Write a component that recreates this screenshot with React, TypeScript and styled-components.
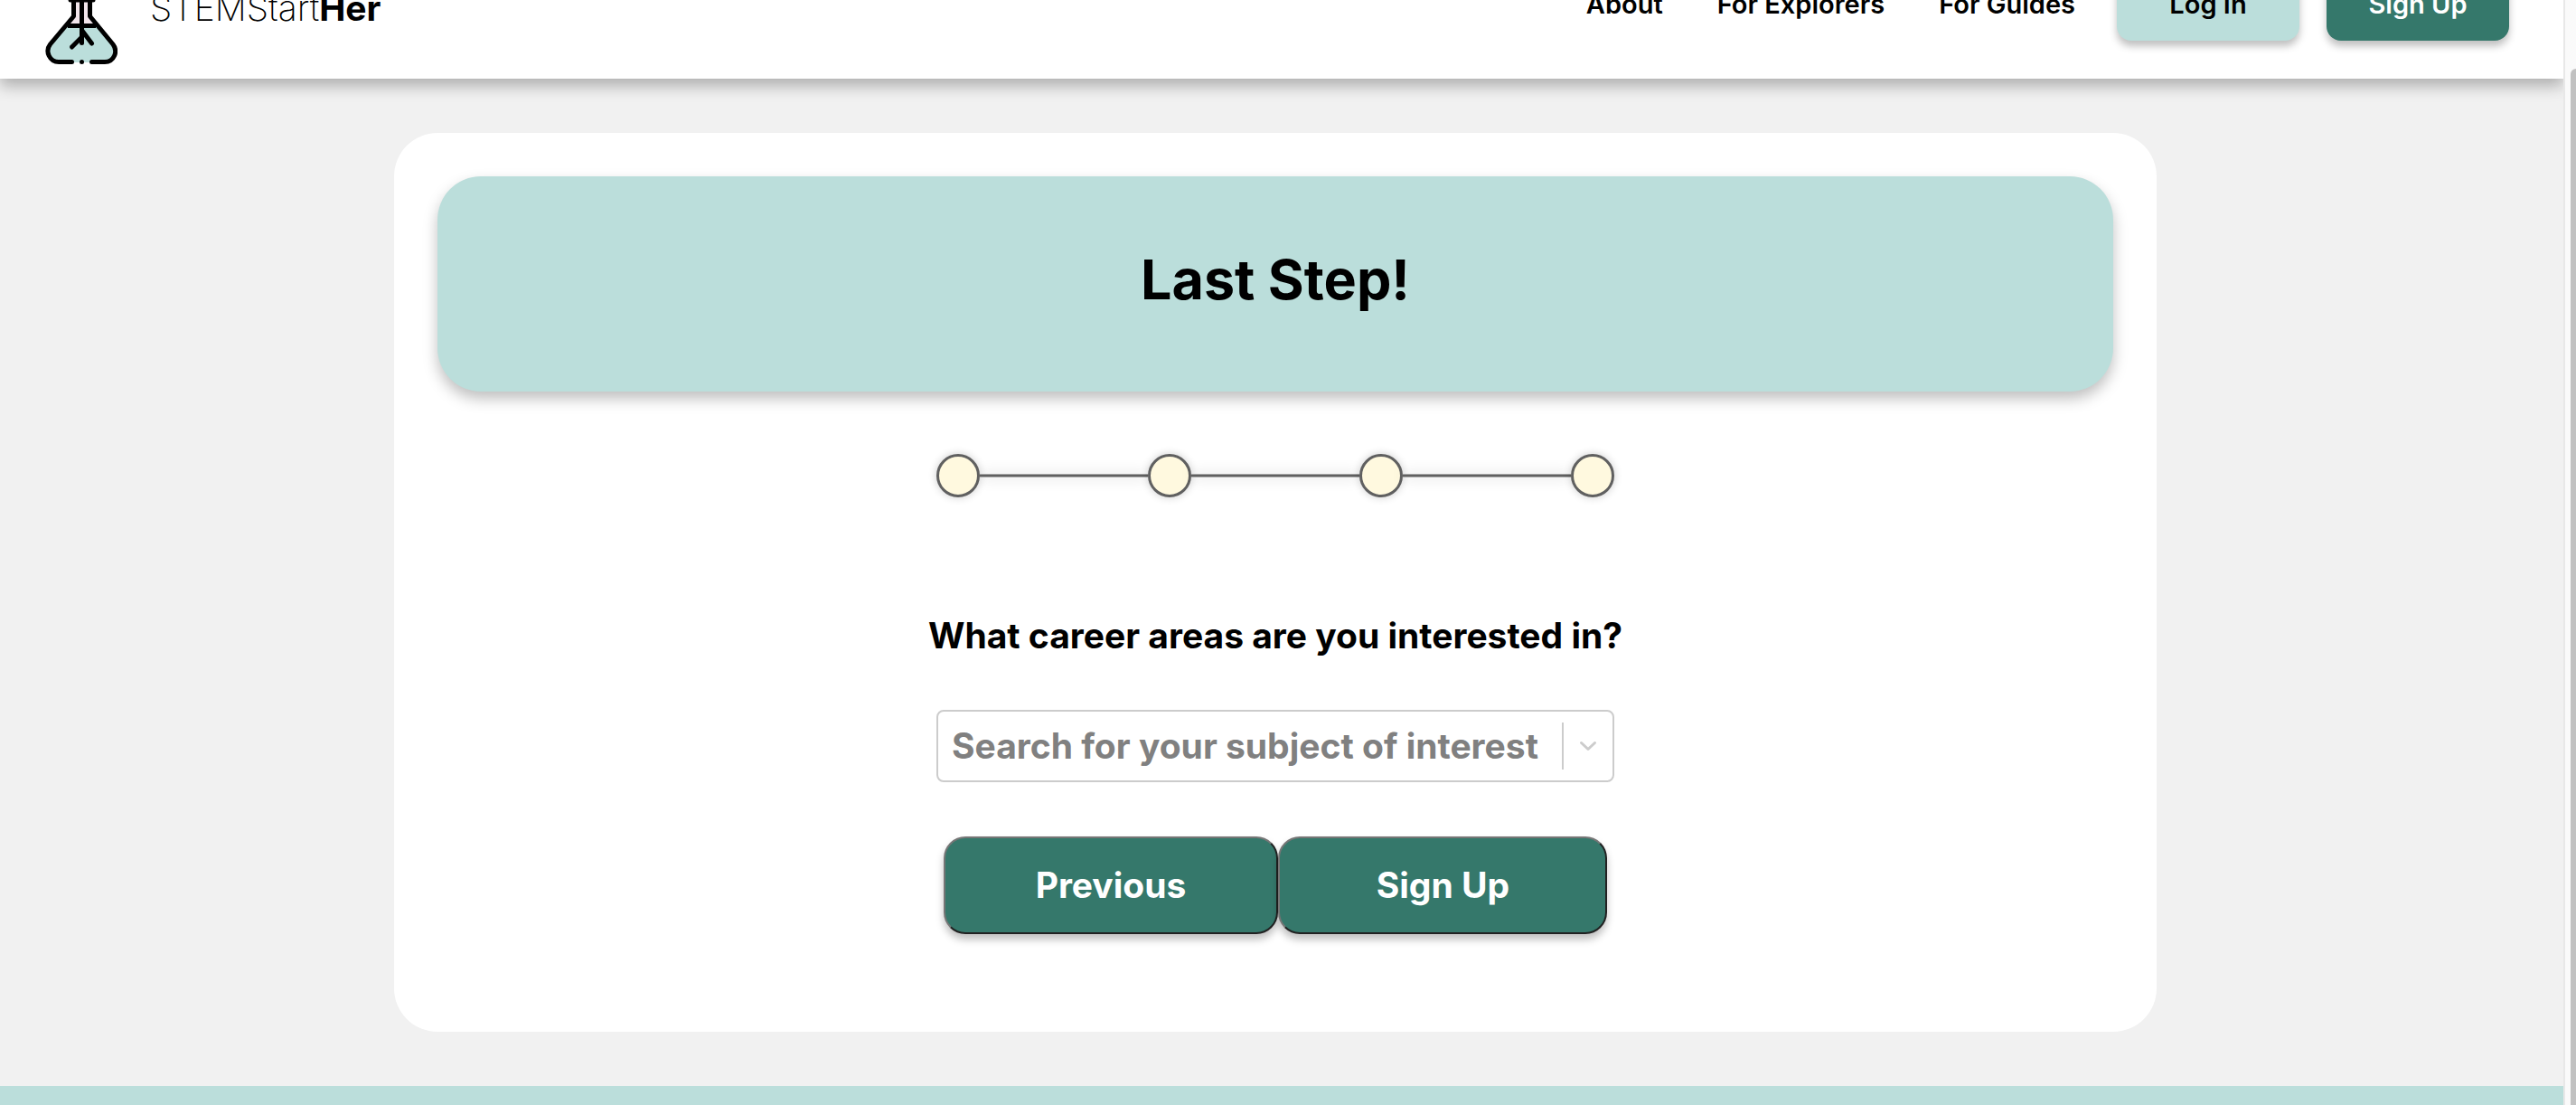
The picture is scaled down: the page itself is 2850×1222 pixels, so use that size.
import React from "react";
import styled, { createGlobalStyle } from "styled-components";

const color = {
  mint: "#bbdedb",
  green: "#35786b",
  page: "#f1f1f1",
  line: "#606060",
  cream: "#fff9df",
  field: "#cccccc",
};

const GlobalStyle = createGlobalStyle`
  *, *::before, *::after { box-sizing: border-box; }
  body {
    margin: 0;
    background: ${color.page};
    color: #000;
    font-family: Inter, "Open Sans", sans-serif;
  }
`;

const Frame = styled.div`
  display: flex;
  min-height: 100vh;
  overflow: hidden;
`;

const Page = styled.div`
  flex: 1;
  min-width: 0;
  display: flex;
  flex-direction: column;
  overflow: hidden;
`;

const ScrollTrack = styled.div`
  width: 14px;
  display: flex;
  padding: 76px 0 0 6px;
  border-left: 2px solid #e8e8e8;
  background: #fafafa;
`;

const ScrollThumb = styled.div`
  flex: 1;
  border-radius: 8px 0 0 0;
  background: #c1c1c1;
`;

/* The page is scrolled a little, so the bar starts above the window. */
const Header = styled.header`
  display: flex;
  align-items: center;
  justify-content: space-between;
  height: 164px;
  margin-top: -77px;
  padding: 0 60px 0 50px;
  background: #fff;
  box-shadow: 0 8px 16px rgba(0, 0, 0, 0.28);
`;

const Brand = styled.a`
  display: flex;
  align-items: center;
  gap: 36px;
  color: #000;
  text-decoration: none;
`;

const Wordmark = styled.span`
  padding-top: 8px;
  font-size: 39px;
  font-weight: 200;
  line-height: 56px;

  strong { font-weight: 700; }
`;

const Nav = styled.nav`
  display: flex;
  align-items: center;
  gap: 60px;
`;

const NavLink = styled.a`
  color: #000;
  text-decoration: none;
  font-size: 29px;
  font-weight: 600;
  line-height: 40px;
`;

const NavButtons = styled.div`
  display: flex;
  gap: 30px;
  margin-left: -14px;
`;

const NavButton = styled.button<{ $primary?: boolean }>`
  width: 202px;
  height: 80px;
  border: 0;
  border-radius: 16px;
  background: ${(p) => (p.$primary ? color.green : color.mint)};
  color: ${(p) => (p.$primary ? "#fff" : "#000")};
  box-shadow: 0 6px 8px rgba(0, 0, 0, 0.25);
  font: 600 29px/40px Inter, sans-serif;
`;

const Main = styled.main`
  display: flex;
  justify-content: center;
  padding: 60px 74px 60px 60px;
`;

const Card = styled.section`
  flex: 1;
  max-width: 1950px;
  display: flex;
  flex-direction: column;
  align-items: center;
  padding: 48px 48px 108px;
  border-radius: 48px;
  background: #fff;
`;

const Banner = styled.div`
  align-self: stretch;
  padding: 76px 48px 86px;
  border-radius: 48px;
  background: ${color.mint};
  box-shadow: 0 8px 16px rgba(0, 0, 0, 0.25);
  text-align: center;
`;

const Title = styled.h1`
  margin: 0;
  font-size: 61px;
  font-weight: 700;
  line-height: 76px;
`;

const Steps = styled.ol`
  display: flex;
  align-items: center;
  width: 750px;
  max-width: 100%;
  margin: 69px 0 0;
  padding: 0;
  list-style: none;
`;

const Step = styled.li`
  display: flex;
  align-items: center;

  &:not(:first-child) { flex: 1; }

  &:not(:first-child)::before {
    content: "";
    flex: 1;
    height: 4px;
    border: solid #a6a6a6;
    border-width: 1px 0;
    background: ${color.line};
    box-shadow: 0 0 16px rgba(0, 0, 0, 0.2);
  }
`;

const Dot = styled.span`
  width: 48px;
  height: 48px;
  border: 3px solid ${color.line};
  border-radius: 50%;
  background: ${color.cream};
  box-shadow: 0 0 10px rgba(0, 0, 0, 0.2);
`;

const Form = styled.form`
  display: flex;
  flex-direction: column;
  align-items: center;
  max-width: 100%;
  margin-top: 125px;
`;

const Question = styled.label`
  font-size: 39px;
  font-weight: 700;
  line-height: 56px;
`;

const Field = styled.div`
  display: flex;
  align-items: center;
  width: 750px;
  max-width: 100%;
  height: 80px;
  margin-top: 54px;
  border: 2px solid ${color.field};
  border-radius: 8px;
  background: #fff;
`;

const Search = styled.input`
  flex: 1;
  min-width: 0;
  height: 56px;
  padding: 0 0 0 15px;
  border: 0;
  outline: 0;
  background: transparent;
  color: #000;
  font: 700 39px/56px Inter, sans-serif;

  &::placeholder { color: #808080; opacity: 1; }
`;

const Toggle = styled.button`
  display: flex;
  align-items: center;
  justify-content: center;
  width: 56px;
  height: 52px;
  padding: 0;
  border: 0;
  border-left: 2px solid ${color.field};
  background: transparent;
`;

const Actions = styled.div`
  display: flex;
  margin-top: 60px;
`;

const Action = styled.button`
  min-width: 364px;
  height: 108px;
  padding: 0 100px;
  border: 2px solid;
  border-color: #767676 #212121 #212121 #767676;
  border-radius: 24px;
  background: ${color.green};
  color: #fff;
  box-shadow: 0 6px 8px rgba(0, 0, 0, 0.25);
  font: 700 39px/56px Inter, sans-serif;
`;

const Footer = styled.footer`
  flex: 1;
  min-height: 21px;
  background: ${color.mint};
`;

const Flask = () => (
  <svg width="80" height="132" viewBox="50 -61 80 132" fill="none" aria-hidden="true">
    <path d="M82 0V18L74 28H107L99 18V0Z" fill="#f3e6ec" />
    <path d="M74 28H107L125 50C131 60 125 69 116 69H65C55 69 49 60 56 50Z" fill={color.mint} />
    <g stroke="#000" strokeWidth="5" strokeLinecap="round" strokeLinejoin="round">
      <path d="M78 0H103" />
      <path d="M81.5 0V18L55.500 49C49.500 57 55 68.500 65 68.500H79.500" />
      <path d="M99.500 0V18L125 49C131 57 126 68.500 116 68.500H101.500" />
      <path d="M75 28.500H106" strokeLinecap="butt" />
      <path d="M90.500 -30V47.500" />
      <path d="M90.500 41L79.500 52" />
      <path d="M91 34L101.500 48" />
      <path d="M90.500 -30L72 -48M90.500 -18L109 -36" />
      <path d="M90.500 68.500V68.500" />
    </g>
  </svg>
);

const steps = ["Account", "Profile", "Background", "Interests"];

export default function App() {
  return (
    <>
      <GlobalStyle />
      <Frame>
        <Page>
          <Header>
            <Brand href="#home">
              <Flask />
              <Wordmark>STEMStart<strong>Her</strong></Wordmark>
            </Brand>
            <Nav>
              <NavLink href="#about">About</NavLink>
              <NavLink href="#explorers">For Explorers</NavLink>
              <NavLink href="#guides">For Guides</NavLink>
              <NavButtons>
                <NavButton type="button">Log In</NavButton>
                <NavButton type="button" $primary>Sign Up</NavButton>
              </NavButtons>
            </Nav>
          </Header>
          <Main>
            <Card>
              <Banner>
                <Title>Last Step!</Title>
              </Banner>
              <Steps>
                {steps.map((step) => (
                  <Step key={step}>
                    <Dot />
                  </Step>
                ))}
              </Steps>
              <Form onSubmit={(e) => e.preventDefault()}>
                <Question htmlFor="subject">What career areas are you interested in?</Question>
                <Field>
                  <Search id="subject" type="text" placeholder="Search for your subject of interest" />
                  <Toggle type="button" aria-label="Show subjects">
                    <svg width="20" height="12" viewBox="0 0 20 12" fill="none" aria-hidden="true">
                      <path d="M2.500 2.500L10 9.500L17.500 2.500" stroke={color.field} strokeWidth="3" strokeLinecap="round" strokeLinejoin="round" />
                    </svg>
                  </Toggle>
                </Field>
                <Actions>
                  <Action type="button">Previous</Action>
                  <Action type="submit">Sign Up</Action>
                </Actions>
              </Form>
            </Card>
          </Main>
          <Footer />
        </Page>
        <ScrollTrack aria-hidden="true">
          <ScrollThumb />
        </ScrollTrack>
      </Frame>
    </>
  );
}
